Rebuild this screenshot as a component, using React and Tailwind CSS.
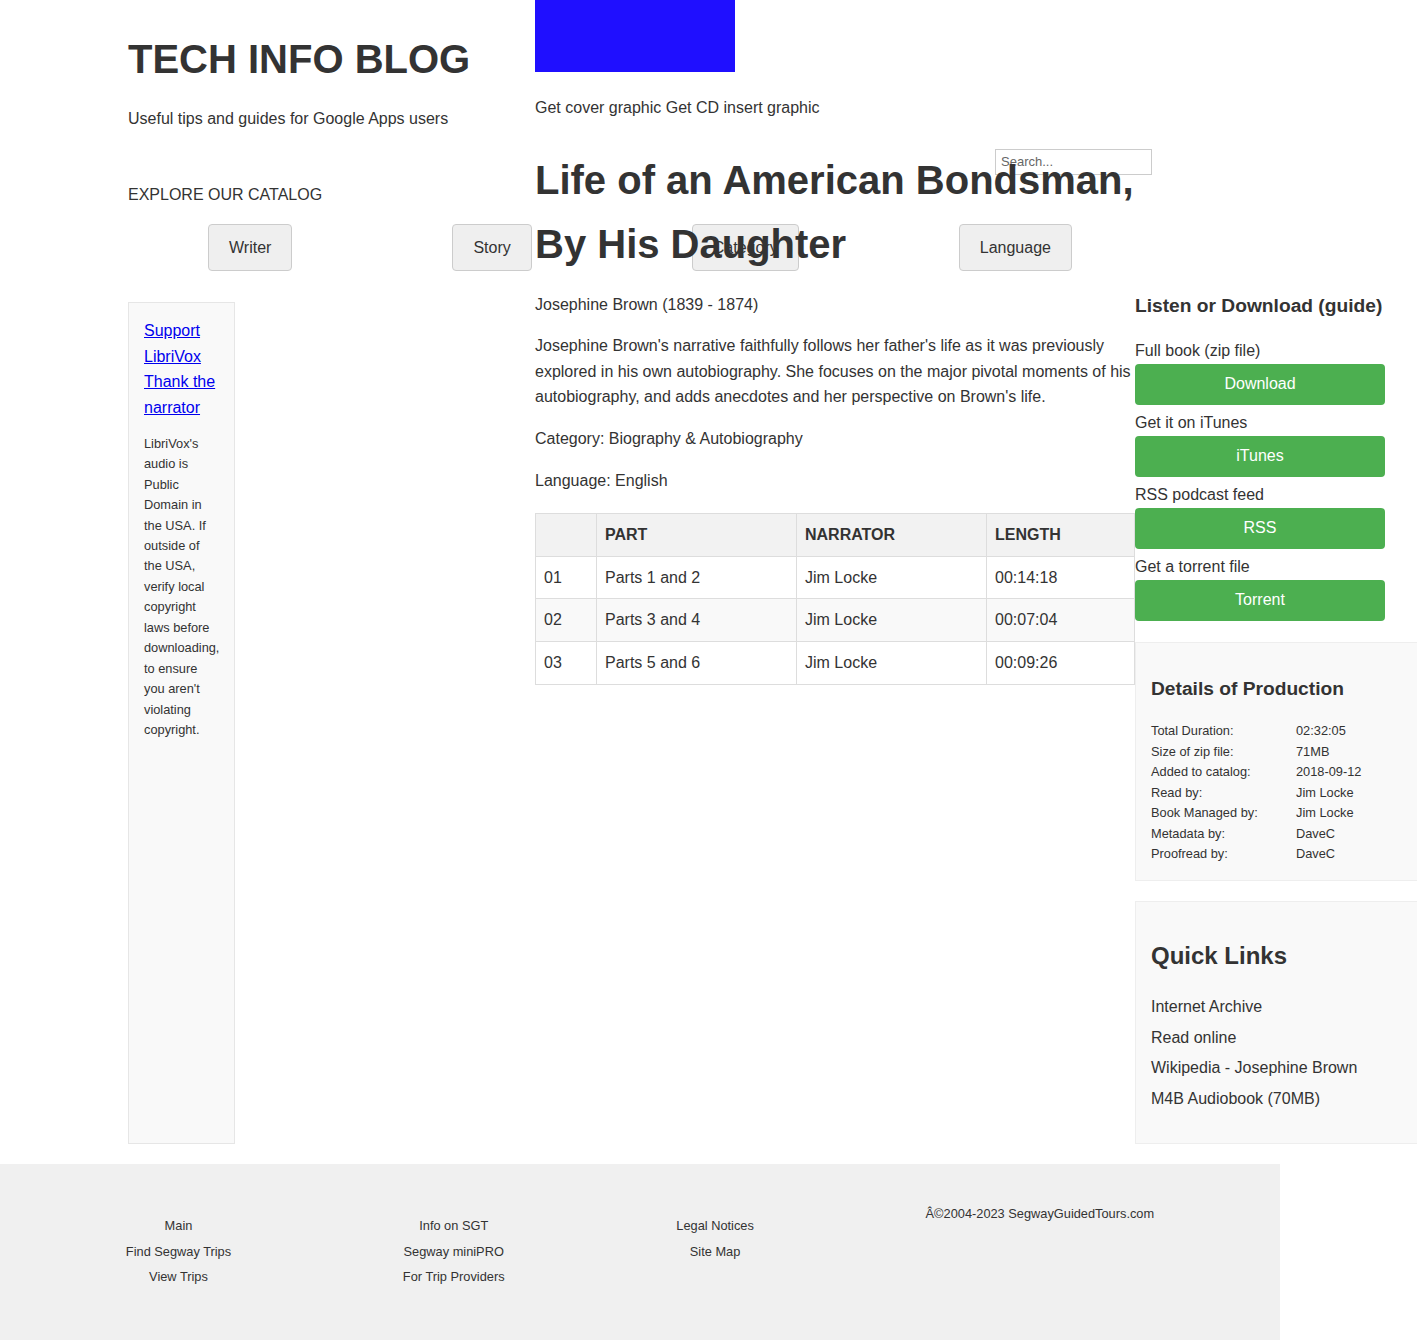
const navItems = ['Writer', 'Story', 'Category', 'Language']

const downloads = [
  { label: 'Full book (zip file)', button: 'Download' },
  { label: 'Get it on iTunes', button: 'iTunes' },
  { label: 'RSS podcast feed', button: 'RSS' },
  { label: 'Get a torrent file', button: 'Torrent' },
]

const sections = [
  { num: '01', part: 'Parts 1 and 2', narrator: 'Jim Locke', length: '00:14:18' },
  { num: '02', part: 'Parts 3 and 4', narrator: 'Jim Locke', length: '00:07:04' },
  { num: '03', part: 'Parts 5 and 6', narrator: 'Jim Locke', length: '00:09:26' },
]

const details = [
  ['Total Duration:', '02:32:05'],
  ['Size of zip file:', '71MB'],
  ['Added to catalog:', '2018-09-12'],
  ['Read by:', 'Jim Locke'],
  ['Book Managed by:', 'Jim Locke'],
  ['Metadata by:', 'DaveC'],
  ['Proofread by:', 'DaveC'],
]

const quickLinks = ['Internet Archive', 'Read online', 'Wikipedia - Josephine Brown', 'M4B Audiobook (70MB)']

const footerCols = [
  ['Main', 'Find Segway Trips', 'View Trips'],
  ['Info on SGT', 'Segway miniPRO', 'For Trip Providers'],
  ['Legal Notices', 'Site Map'],
]

function LeftColumn() {
  return (
    <aside className="flex w-[407px] shrink-0 flex-col">
      <h1 className="pt-[35px] text-[40px] font-bold leading-[48px]">TECH INFO BLOG</h1>
      <p className="mt-[23px]">Useful tips and guides for Google Apps users</p>

      <div className="mt-[17px] flex w-[1024px] justify-end">
        <input
          type="text"
          placeholder="Search..."
          className="h-[26px] w-[157px] border border-[#ccc] bg-white px-[5px] text-[13px] text-[#333] outline-none placeholder:text-[#666]"
        />
      </div>

      <p className="mt-[7px] uppercase">Explore our catalog</p>

      <nav className="mt-[17px] flex w-[1024px] justify-around">
        {navItems.map((item) => (
          <button
            key={item}
            className="h-[47px] rounded-[4px] border border-[#ccc] bg-[#efefef] px-[20px] text-[16px] text-[#333]"
          >
            {item}
          </button>
        ))}
      </nav>

      <div className="mt-[31px] w-[107px] flex-1 border border-[#e6e6e6] bg-[#f9f9f9] pl-[15px] pr-[14px] pt-[15px]">
        <a href="#" className="block text-[#0000ee] underline">
          Support LibriVox
        </a>
        <a href="#" className="block text-[#0000ee] underline">
          Thank the narrator
        </a>
        <p className="mt-[13px] text-[12.8px] leading-[20.48px]">
          LibriVox's audio is Public Domain in the USA. If outside of the USA, verify local copyright
          laws before downloading, to ensure you aren't violating copyright.
        </p>
      </div>
    </aside>
  )
}

function MainColumn() {
  return (
    <main className="w-[600px] shrink-0">
      <div className="h-[72px] w-[200px] bg-[#1f0fff]" />
      <p className="mt-[23px]">
        <span>Get cover graphic</span> <span>Get CD insert graphic</span>
      </p>

      <h1 className="mt-[27px] text-[40px] font-bold leading-[64px]">
        Life of an American Bondsman, By His Daughter
      </h1>

      <p className="mt-[16px]">Josephine Brown (1839 - 1874)</p>
      <p className="mt-[16px]">
        Josephine Brown's narrative faithfully follows her father's life as it was previously explored in
        his own autobiography. She focuses on the major pivotal moments of his autobiography, and adds
        anecdotes and her perspective on Brown's life.
      </p>
      <p className="mt-[16px]">Category: Biography &amp; Autobiography</p>
      <p className="mt-[16px]">Language: English</p>

      <table className="mt-[20px] w-full table-fixed border-collapse text-left">
        <colgroup>
          <col className="w-[61px]" />
          <col className="w-[200px]" />
          <col className="w-[190px]" />
          <col />
        </colgroup>
        <thead>
          <tr className="bg-[#f2f2f2]">
            <th className="border border-[#ddd] p-[8px] font-bold"></th>
            <th className="border border-[#ddd] p-[8px] font-bold">PART</th>
            <th className="border border-[#ddd] p-[8px] font-bold">NARRATOR</th>
            <th className="border border-[#ddd] p-[8px] font-bold">LENGTH</th>
          </tr>
        </thead>
        <tbody>
          {sections.map((s, i) => (
            <tr key={s.num} className={i % 2 === 1 ? 'bg-[#f9f9f9]' : 'bg-white'}>
              <td className="border border-[#ddd] p-[8px]">{s.num}</td>
              <td className="border border-[#ddd] p-[8px]">{s.part}</td>
              <td className="border border-[#ddd] p-[8px]">{s.narrator}</td>
              <td className="border border-[#ddd] p-[8px]">{s.length}</td>
            </tr>
          ))}
        </tbody>
      </table>
    </main>
  )
}

function RightColumn() {
  return (
    <aside className="w-[282px] shrink-0 pt-[291px]">
      <h3 className="text-[19.2px] font-bold leading-[30.72px]">Listen or Download (guide)</h3>
      <div className="mt-[16px]">
        {downloads.map((d) => (
          <div key={d.button} className="mb-[5px]">
            <div className="h-[26px] leading-[26px]">{d.label}</div>
            <a
              href="#"
              className="flex h-[41px] w-[250px] items-center justify-center rounded-[4px] bg-[#4caf50] text-white"
            >
              {d.button}
            </a>
          </div>
        ))}
      </div>

      <div className="mt-[21px] w-[322px] border border-[#eee] bg-[#f9f9f9] p-[15px]">
        <h3 className="mt-[16px] text-[19.2px] font-bold leading-[30.72px]">Details of Production</h3>
        <div className="mt-[17px] grid grid-cols-2 text-[12.8px] leading-[20.48px]">
          {details.map(([k, v]) => (
            <div key={k} className="contents">
              <div>{k}</div>
              <div>{v}</div>
            </div>
          ))}
        </div>
      </div>

      <div className="mt-[20px] w-[322px] border border-[#eee] bg-[#f9f9f9] p-[15px]">
        <h2 className="mt-[20px] text-[24px] font-bold leading-[38.4px]">Quick Links</h2>
        <ul className="mb-[16px] mt-[19px]">
          {quickLinks.map((l) => (
            <li key={l} className="mb-[5px]">
              <a href="#">{l}</a>
            </li>
          ))}
        </ul>
      </div>
    </aside>
  )
}

export default function App() {
  return (
    <div className="w-full overflow-hidden bg-white font-['Liberation_Sans',Arial,sans-serif] text-[16px] leading-[1.6] text-[#333]">
      <div className="flex items-stretch pl-[128px]">
        <LeftColumn />
        <MainColumn />
        <RightColumn />
      </div>

      <footer className="mt-[20px] flex h-[177px] w-[1280px] items-start justify-around bg-[#f0f0f0] px-[40px] pt-[40px] text-[12.8px] leading-[20.48px]">
        {footerCols.map((col, i) => (
          <ul key={i} className="mt-[12.8px] text-center">
            {col.map((item) => (
              <li key={item} className="mb-[5px]">
                <a href="#">{item}</a>
              </li>
            ))}
          </ul>
        ))}
        <p>Â©2004-2023 SegwayGuidedTours.com</p>
      </footer>
    </div>
  )
}
